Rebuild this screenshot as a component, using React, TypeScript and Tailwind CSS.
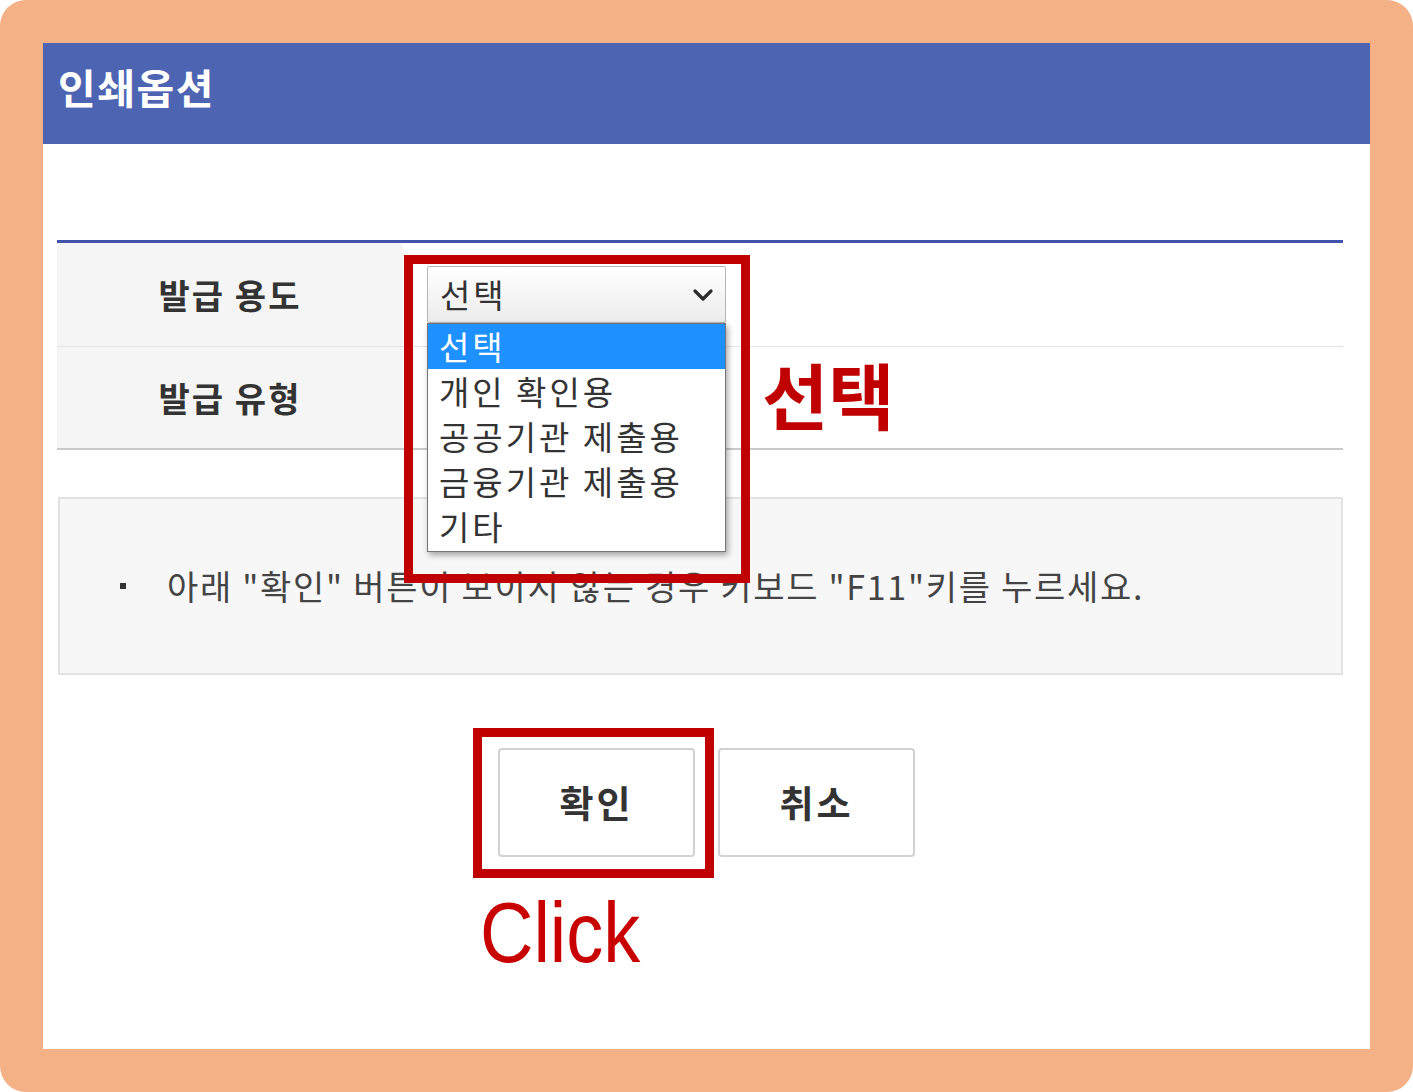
const kr = "font-['Noto_Sans_CJK_KR','Noto_Sans',sans-serif]"

const options = ["선택", "개인 확인용", "공공기관 제출용", "금융기관 제출용", "기타"]

const Chevron = () => (
  <svg width="22" height="14" viewBox="0 0 22 14" fill="none">
    <path d="M3 3l8 8 8-8" stroke="#2b2b2b" strokeWidth="3.2" strokeLinecap="round" strokeLinejoin="round" />
  </svg>
)

const App = () => {
  return (
    <div className={`w-[1413px] h-[1092px] bg-white ${kr}`}>
      <div className="h-full rounded-[26px] bg-[#f3b185] p-[43px]">
        <div className="relative h-full bg-white flex flex-col">
          {/* header */}
          <div className="h-[101px] bg-[#4d64b3] flex items-center pl-[15px] pb-[14px]">
            <h1 className="text-[41px] font-bold text-white leading-none tracking-[1.5px]">인쇄옵션</h1>
          </div>

          {/* table */}
          <div className="mt-[96px] ml-[14px] w-[1286px] border-t-[3px] border-[#4153ab] border-b-2 border-b-[#c9c9c9]">
            <div className="flex h-[104px] border-b border-[#e3e3e3]">
              <div className="w-[346px] bg-[#f5f5f5] flex items-center justify-center text-[34px] font-bold text-[#333] tracking-[2px]">
                발급 용도
              </div>
              <div className="flex-1 pl-[24px] pt-[23px]">
                <div className="relative w-[299px]">
                  <div className="h-[57px] border border-[#b5b5b5] rounded-[2px] bg-gradient-to-b from-white to-[#ececec] flex items-center justify-between pl-[12px] pr-[11px]">
                    <span className="text-[33px] text-[#333] leading-none tracking-[3px]">선택</span>
                    <Chevron />
                  </div>
                  <div className="absolute left-0 top-full w-[299px] bg-white border border-[#767676] shadow-[2px_3px_6px_rgba(0,0,0,0.35)] pb-[2px] z-10">
                    {options.map((o, i) => (
                      <div
                        key={o}
                        className={`h-[45px] flex items-center pl-[11px] text-[33px] leading-none tracking-[3px] ${
                          i === 0 ? "bg-[#1e90ff] text-white" : "text-[#333]"
                        }`}
                      >
                        {o}
                      </div>
                    ))}
                  </div>
                </div>
              </div>
            </div>
            <div className="flex h-[101px]">
              <div className="w-[346px] bg-[#f5f5f5] flex items-center justify-center text-[34px] font-bold text-[#333] tracking-[2px]">
                발급 유형
              </div>
              <div className="flex-1" />
            </div>
          </div>

          {/* notice */}
          <div className="mt-[47px] ml-[15px] w-[1285px] h-[178px] border-2 border-[#e2e2e2] bg-[#f7f7f7] flex items-center pl-[60px]">
            <span className="w-[6px] h-[6px] bg-[#333] mr-[41px]" />
            <p className="text-[34px] text-[#444] leading-none tracking-[1.7px]">
              아래 "확인" 버튼이 보이지 않는 경우 키보드 "F11"키를 누르세요.
            </p>
          </div>

          {/* buttons */}
          <div className="mt-[73px] flex justify-center gap-[23px]">
            <button className="w-[197px] h-[109px] border-2 border-[#d2d2d2] rounded-[4px] bg-white text-[37px] font-bold text-[#333] tracking-[3px]">
              확인
            </button>
            <button className="w-[197px] h-[109px] border-2 border-[#d2d2d2] rounded-[4px] bg-white text-[37px] font-bold text-[#333] tracking-[3px]">
              취소
            </button>
          </div>

          {/* annotations */}
          <div className="absolute left-[361px] top-[212px] w-[346px] h-[328px] border-[9px] border-[#c00000] z-20" />
          <div className="absolute left-[719px] top-[314px] text-[72px] font-bold text-[#c00000] leading-none">선택</div>
          <div className="absolute left-[430px] top-[685px] w-[241px] h-[150px] border-[9px] border-[#c00000]" />
          <div className="absolute left-[437px] top-[846px] origin-left scale-x-[0.86] text-[86px] text-[#c80000] leading-none font-['Liberation_Sans',sans-serif]">
            Click
          </div>
        </div>
      </div>
    </div>
  )
}

export default App
